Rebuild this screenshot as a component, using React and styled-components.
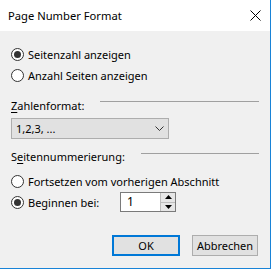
import React from "react";
import styled, { createGlobalStyle } from "styled-components";

const Global = createGlobalStyle`
  html, body { margin: 0; padding: 0; background: #ffffff; }
  body { font-family: "Noto Sans", "Segoe UI", Arial, sans-serif; font-size: 11px; color: #000; }
  * { box-sizing: border-box; }
`;

const Window = styled.div`
  width: 271px;
  height: 269px;
  background: #f0f0f0;
  border-right: 1px solid #1883d7;
  border-bottom: 1px solid #1883d7;
  display: flex;
  flex-direction: column;
`;

const TitleBar = styled.div`
  height: 31px;
  background: #ffffff;
  display: flex;
  align-items: center;
  justify-content: space-between;
  padding: 0 9px 0 8px;
  font-size: 11.2px;
  flex-shrink: 0;
`;

const Title = styled.span`
  line-height: 16px;
`;

const Content = styled.div`
  display: flex;
  flex-direction: column;
  padding: 15px 11px 0 11px;
  flex: 1;
`;

const RadioRow = styled.label`
  display: flex;
  align-items: center;
  height: 16px;
  gap: 4px;
  margin-top: ${(p) => p.$mt || 0}px;
`;

const RadioCircle = styled.span`
  width: 13px;
  height: 13px;
  border-radius: 50%;
  border: 1px solid #333333;
  background: #ffffff;
  display: flex;
  align-items: center;
  justify-content: center;
  flex-shrink: 0;
  &::after {
    content: "";
    width: 7px;
    height: 7px;
    border-radius: 50%;
    background: ${(p) => (p.$checked ? "#333333" : "transparent")};
  }
`;

const SectionHeader = styled.div`
  display: flex;
  align-items: center;
  height: 16px;
  margin-top: ${(p) => p.$mt || 0}px;
`;

const SectionLabel = styled.span`
  white-space: nowrap;
  u { text-decoration: underline; text-underline-offset: 2px; }
`;

const SectionLine = styled.span`
  flex: 1;
  height: 1px;
  background: #a0a0a0;
  margin-left: ${(p) => p.$ml}px;
  align-self: flex-start;
  margin-top: ${(p) => p.$lt}px;
`;

const Select = styled.div`
  width: 158px;
  height: 21px;
  margin-top: ${(p) => p.$mt || 0}px;
  background: #e1e1e1;
  border: 1px solid #adadad;
  display: flex;
  align-items: center;
  justify-content: space-between;
  padding: 0 4px 0 4px;
`;

const StartRow = styled.div`
  display: flex;
  align-items: center;
  margin-top: ${(p) => p.$mt || 0}px;
`;

const Spin = styled.div`
  margin-left: auto;
  margin-right: 83px;
  width: 56px;
  height: 20px;
  border: 1px solid #7a7a7a;
  background: #ffffff;
  display: flex;
`;

const SpinInput = styled.div`
  flex: 1;
  padding-left: 6px;
  line-height: 18px;
  font-size: 12px;
`;

const SpinButtons = styled.div`
  width: 15px;
  display: flex;
  flex-direction: column;
  border-left: 1px solid #bcbcbc;
`;

const SpinButton = styled.div`
  flex: 1;
  background: #e6e6e6;
  display: flex;
  align-items: center;
  justify-content: center;
  & + & { border-top: 1px solid #bcbcbc; }
`;

const ButtonRow = styled.div`
  display: flex;
  justify-content: flex-end;
  gap: 12px;
  margin-top: auto;
  margin-bottom: 12px;
  padding-right: 1px;
`;

const Button = styled.div`
  width: ${(p) => p.$w}px;
  height: 21px;
  background: #e1e1e1;
  border: ${(p) => (p.$primary ? "2px solid #0078d7" : "1px solid #adadad")};
  display: flex;
  align-items: center;
  justify-content: center;
`;

export default function App() {
  return (
    <>
      <Global />
      <Window>
        <TitleBar>
          <Title>Page Number Format</Title>
          <svg width="11" height="11" viewBox="0 0 11 11">
            <path d="M0.5 0.5 L10.5 10.5 M10.5 0.5 L0.5 10.5" stroke="#000" strokeWidth="1" />
          </svg>
        </TitleBar>
        <Content>
          <RadioRow>
            <RadioCircle $checked />
            <span>Seitenzahl anzeigen</span>
          </RadioRow>
          <RadioRow $mt={5}>
            <RadioCircle />
            <span>Anzahl Seiten anzeigen</span>
          </RadioRow>
          <SectionHeader $mt={14}>
            <SectionLabel><u>Z</u>ahlenformat:</SectionLabel>
            <SectionLine $ml={16} $lt={4} />
          </SectionHeader>
          <Select $mt={5}>
            <span>1,2,3, ...</span>
            <svg width="9" height="6" viewBox="0 0 9 6">
              <path d="M0.5 0.5 L4.5 4.5 L8.5 0.5" stroke="#333" fill="none" strokeWidth="1" />
            </svg>
          </Select>
          <SectionHeader $mt={9}>
            <SectionLabel>S<u>e</u>itennummerierung:</SectionLabel>
            <SectionLine $ml={16} $lt={5} />
          </SectionHeader>
          <RadioRow $mt={9}>
            <RadioCircle />
            <span>Fortsetzen vom vorherigen Abschnitt</span>
          </RadioRow>
          <StartRow $mt={3}>
            <RadioRow>
              <RadioCircle $checked />
              <span>Beginnen bei:</span>
            </RadioRow>
            <Spin>
              <SpinInput>1</SpinInput>
              <SpinButtons>
                <SpinButton>
                  <svg width="7" height="4" viewBox="0 0 7 4"><path d="M3.5 0 L7 4 L0 4 Z" fill="#000" /></svg>
                </SpinButton>
                <SpinButton>
                  <svg width="7" height="4" viewBox="0 0 7 4"><path d="M0 0 L7 0 L3.5 4 Z" fill="#000" /></svg>
                </SpinButton>
              </SpinButtons>
            </Spin>
          </StartRow>
          <ButtonRow>
            <Button $primary $w={68}>OK</Button>
            <Button $w={66}>Abbrechen</Button>
          </ButtonRow>
        </Content>
      </Window>
    </>
  );
}
